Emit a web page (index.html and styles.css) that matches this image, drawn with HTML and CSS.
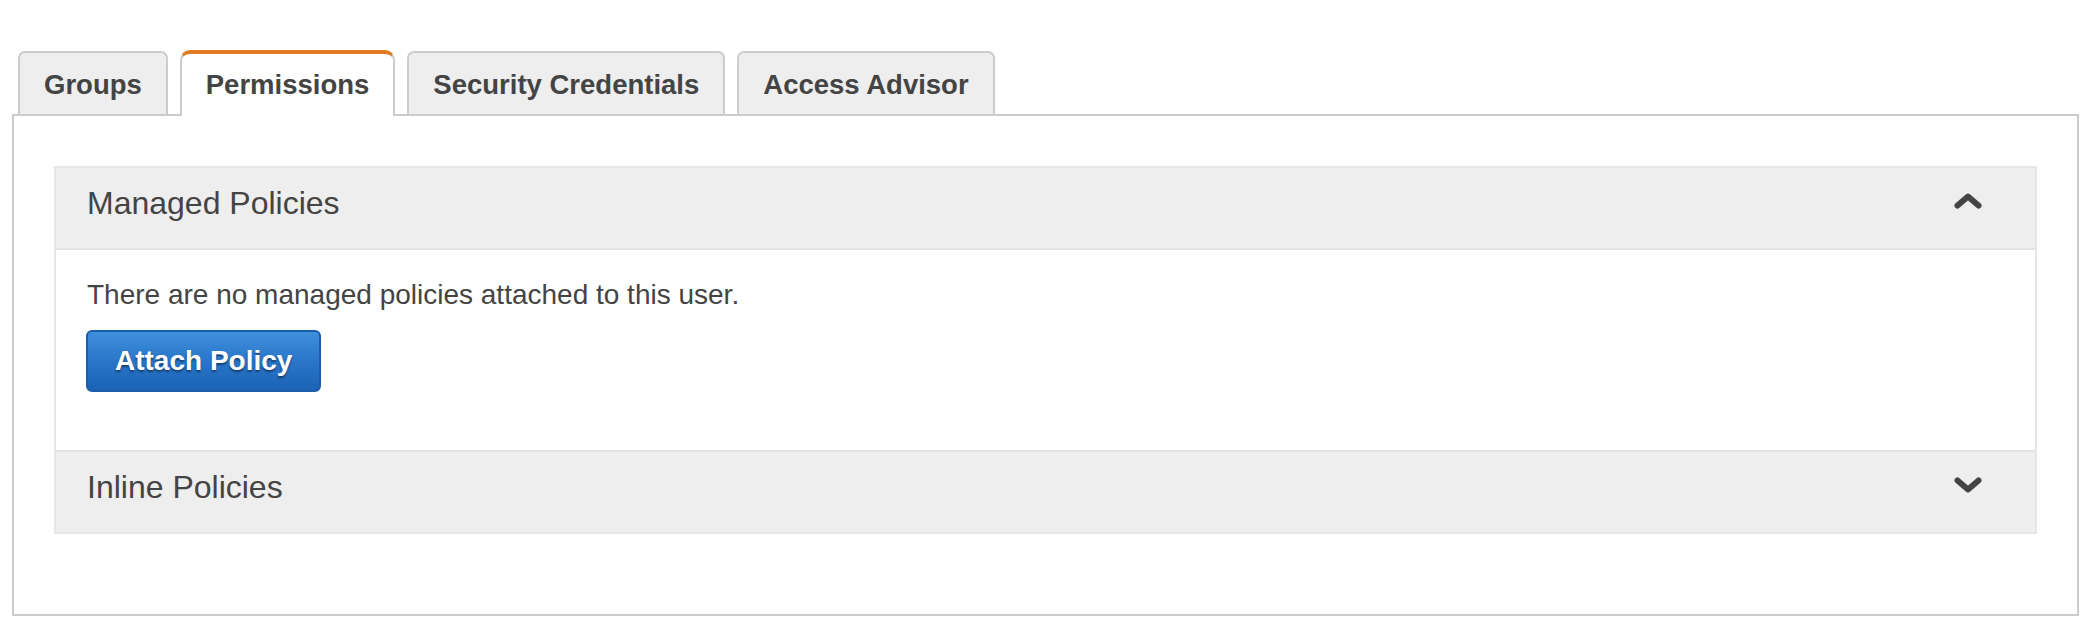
FILE: index.html
```html
<!DOCTYPE html>
<html lang="en">
<head>
<meta charset="utf-8">
<title>User - Permissions</title>
<link rel="stylesheet" href="styles.css">
</head>
<body>
<div class="page">
  <div class="tabs">
    <div class="tab">Groups</div>
    <div class="tab tab-active">Permissions</div>
    <div class="tab">Security Credentials</div>
    <div class="tab">Access Advisor</div>
  </div>
  <div class="panel">
    <div class="box">
      <div class="section-head head-open">
        <span class="section-title">Managed Policies</span>
        <svg class="chevron" width="28" height="16" viewBox="0 0 28 16"><polyline points="3.5,12.5 14,3.5 24.5,12.5" fill="none" stroke="#444" stroke-width="6" stroke-linecap="round" stroke-linejoin="round"/></svg>
      </div>
      <div class="section-body">
        <p class="empty-text">There are no managed policies attached to this user.</p>
        <button class="btn-primary" type="button">Attach Policy</button>
      </div>
      <div class="section-head head-closed">
        <span class="section-title">Inline Policies</span>
        <svg class="chevron" width="28" height="16" viewBox="0 0 28 16"><polyline points="3.5,3.5 14,12.5 24.5,3.5" fill="none" stroke="#444" stroke-width="6" stroke-linecap="round" stroke-linejoin="round"/></svg>
      </div>
    </div>
  </div>
</div>
</body>
</html>
```

FILE: styles.css
```css
html, body {
  margin: 0;
  padding: 0;
  background: #ffffff;
}

body {
  font-family: "Liberation Sans", Arial, Helvetica, sans-serif;
  color: #444444;
}

.page {
  padding: 50px 13px 0 12px;
}

.tabs {
  display: flex;
  align-items: flex-end;
  gap: 12px;
  margin-left: 6px;
  margin-bottom: -2px;
}

.tab {
  background: #eeeeee;
  border: 2px solid #cccccc;
  border-bottom: none;
  border-radius: 7px 7px 0 0;
  padding: 16px 24px 14px;
  margin-bottom: 2px;
  font-size: 27.5px;
  font-weight: bold;
  line-height: 31px;
  color: #444444;
  white-space: nowrap;
}

.tab-active {
  position: relative;
  z-index: 1;
  background: #ffffff;
  border-top: 4px solid #e07b22;
  border-radius: 10px 10px 0 0;
  padding-top: 15px;
  padding-bottom: 16px;
  margin-bottom: 0;
}

.panel {
  border: 2px solid #cccccc;
  padding: 50px 40px 80px 40px;
}

.box {
  border: 2px solid #e6e6e6;
}

.section-head {
  height: 70px;
  padding: 0 53px 10px 31px;
  background: #eeeeee;
  display: flex;
  align-items: center;
  justify-content: space-between;
}

.head-open {
  border-bottom: 2px solid #e3e3e3;
}

.head-closed {
  border-top: 2px solid #e3e3e3;
}

.section-title {
  font-size: 32px;
  line-height: 40px;
  color: #444444;
}

.chevron {
  display: block;
  margin-bottom: 4px;
}

.section-body {
  height: 200px;
  box-sizing: border-box;
  padding: 25px 31px 0;
}

.empty-text {
  margin: 0;
  font-size: 28px;
  line-height: 40px;
  color: #444444;
}

.btn-primary {
  display: block;
  margin: 15px 0 0 -1px;
  height: 62px;
  padding: 0 27px;
  border: 2px solid #1b5dab;
  border-radius: 6px;
  background: linear-gradient(to bottom, #3f8fdc 0%, #2a76c9 50%, #1b62b4 100%);
  color: #ffffff;
  font-family: "Liberation Sans", Arial, Helvetica, sans-serif;
  font-size: 28px;
  font-weight: bold;
  line-height: 58px;
  text-shadow: 0 2px 2px rgba(0, 0, 0, 0.45);
  cursor: pointer;
}
```
